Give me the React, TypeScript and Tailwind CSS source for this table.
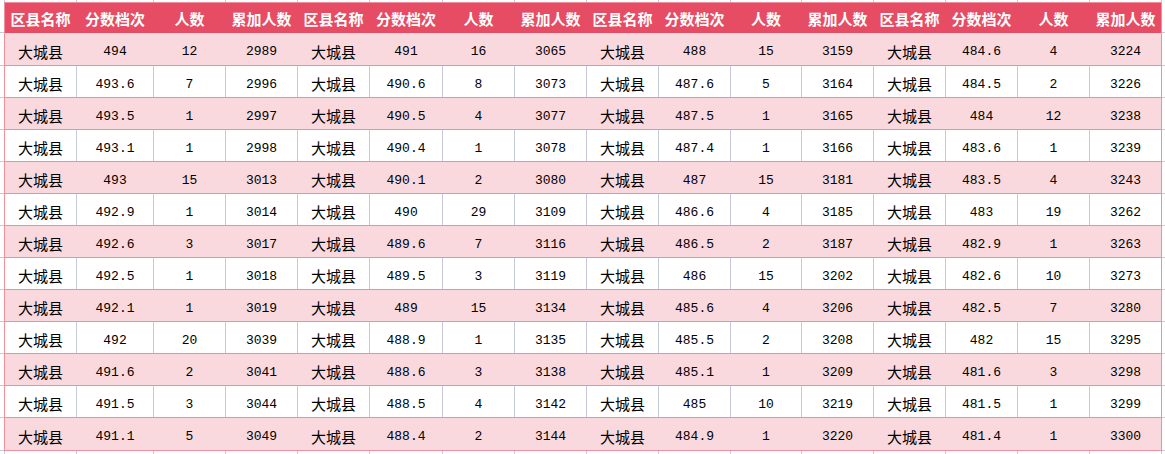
const groups: [string, string, string][][] = [
  [
    ['494', '12', '2989'], ['493.6', '7', '2996'], ['493.5', '1', '2997'], ['493.1', '1', '2998'],
    ['493', '15', '3013'], ['492.9', '1', '3014'], ['492.6', '3', '3017'], ['492.5', '1', '3018'],
    ['492.1', '1', '3019'], ['492', '20', '3039'], ['491.6', '2', '3041'], ['491.5', '3', '3044'],
    ['491.1', '5', '3049'],
  ],
  [
    ['491', '16', '3065'], ['490.6', '8', '3073'], ['490.5', '4', '3077'], ['490.4', '1', '3078'],
    ['490.1', '2', '3080'], ['490', '29', '3109'], ['489.6', '7', '3116'], ['489.5', '3', '3119'],
    ['489', '15', '3134'], ['488.9', '1', '3135'], ['488.6', '3', '3138'], ['488.5', '4', '3142'],
    ['488.4', '2', '3144'],
  ],
  [
    ['488', '15', '3159'], ['487.6', '5', '3164'], ['487.5', '1', '3165'], ['487.4', '1', '3166'],
    ['487', '15', '3181'], ['486.6', '4', '3185'], ['486.5', '2', '3187'], ['486', '15', '3202'],
    ['485.6', '4', '3206'], ['485.5', '2', '3208'], ['485.1', '1', '3209'], ['485', '10', '3219'],
    ['484.9', '1', '3220'],
  ],
  [
    ['484.6', '4', '3224'], ['484.5', '2', '3226'], ['484', '12', '3238'], ['483.6', '1', '3239'],
    ['483.5', '4', '3243'], ['483', '19', '3262'], ['482.9', '1', '3263'], ['482.6', '10', '3273'],
    ['482.5', '7', '3280'], ['482', '15', '3295'], ['481.6', '3', '3298'], ['481.5', '1', '3299'],
    ['481.4', '1', '3300'],
  ],
];

const headers = ['区县名称', '分数档次', '人数', '累加人数'];

// widths include the 1px left line (except the first column, which sits after the table border)
const widths = [
  'w-[71px]', 'w-[77px]', 'w-[72px]', 'w-[72px]',
  'w-[72px]', 'w-[73px]', 'w-[72px]', 'w-[72px]',
  'w-[72px]', 'w-[72px]', 'w-[71px]', 'w-[72px]',
  'w-[72px]', 'w-[72px]', 'w-[72px]', 'w-[72px]',
];
// the outside strips follow the sheet gridlines, so col 0 gets its own line at the table edge
const stripWidths = [
  'w-[72px]', 'w-[77px]', 'w-[72px]', 'w-[72px]',
  'w-[72px]', 'w-[73px]', 'w-[72px]', 'w-[72px]',
  'w-[72px]', 'w-[72px]', 'w-[71px]', 'w-[72px]',
  'w-[72px]', 'w-[72px]', 'w-[72px]', 'w-[72px]',
];

const cjk = "font-['Noto_Sans_CJK_SC',sans-serif]";
const mono = "font-['Liberation_Mono','Noto_Sans_CJK_SC',monospace]";

function Strip({ h }: { h: string }) {
  return (
    <div className={`flex ${h}`}>
      <div className="w-[4px] shrink-0" />
      {stripWidths.map((w, i) => (
        <div key={i} className={`${w} shrink-0 border-l border-[#c6cbda]`} />
      ))}
      <div className="flex-1 border-l border-[#c6cbda]" />
    </div>
  );
}

function HeaderRow() {
  const cells = [0, 1, 2, 3].flatMap(() => headers);
  return (
    <div className="flex h-[31px]">
      <div className="w-[4px] shrink-0 border-b border-[#c6cbda]" />
      <div className="flex shrink-0 border-t border-x border-[#f0909e] bg-[#e64c63]">
        {cells.map((t, i) => (
          <div
            key={i}
            className={`${widths[i]} shrink-0 flex items-center justify-center pt-[2px] text-[15px] font-bold text-white whitespace-nowrap ${cjk} ${
              i === 0 ? '' : 'border-l border-[#e64c63]'
            }`}
          >
            {t}
          </div>
        ))}
      </div>
      <div className="flex-1 border-b border-[#c6cbda]" />
    </div>
  );
}

function DataRow({ r }: { r: number }) {
  const pink = r % 2 === 0;
  const tall = r === 0 || r === 12;
  const cells = groups.flatMap((g) => ['大城县', ...g[r]]);
  return (
    <div className={`flex ${tall ? 'h-[33px]' : 'h-[32px]'}`}>
      <div className="w-[4px] shrink-0 border-b border-[#c6cbda]" />
      <div
        className={`flex shrink-0 border-b border-x border-[#f0909e] ${pink ? 'bg-[#fad9de]' : 'bg-white'}`}
      >
        {cells.map((t, i) => (
          <div
            key={i}
            className={`${widths[i]} shrink-0 flex items-center justify-center pt-[6px] text-black whitespace-nowrap ${
              i % 4 === 0 ? `${cjk} text-[15px]` : `${mono} text-[13px]`
            } ${i === 0 ? '' : pink ? 'border-l border-[#fad9de]' : 'border-l border-[#c6cbda]'}`}
          >
            {t}
          </div>
        ))}
      </div>
      <div className="flex-1 border-b border-[#c6cbda]" />
    </div>
  );
}

export default function App() {
  return (
    <div className="w-[1165px] h-[454px] overflow-hidden bg-white flex flex-col">
      <Strip h="h-[2px]" />
      <HeaderRow />
      {Array.from({ length: 13 }, (_, r) => (
        <DataRow key={r} r={r} />
      ))}
      <Strip h="h-[3px]" />
    </div>
  );
}
